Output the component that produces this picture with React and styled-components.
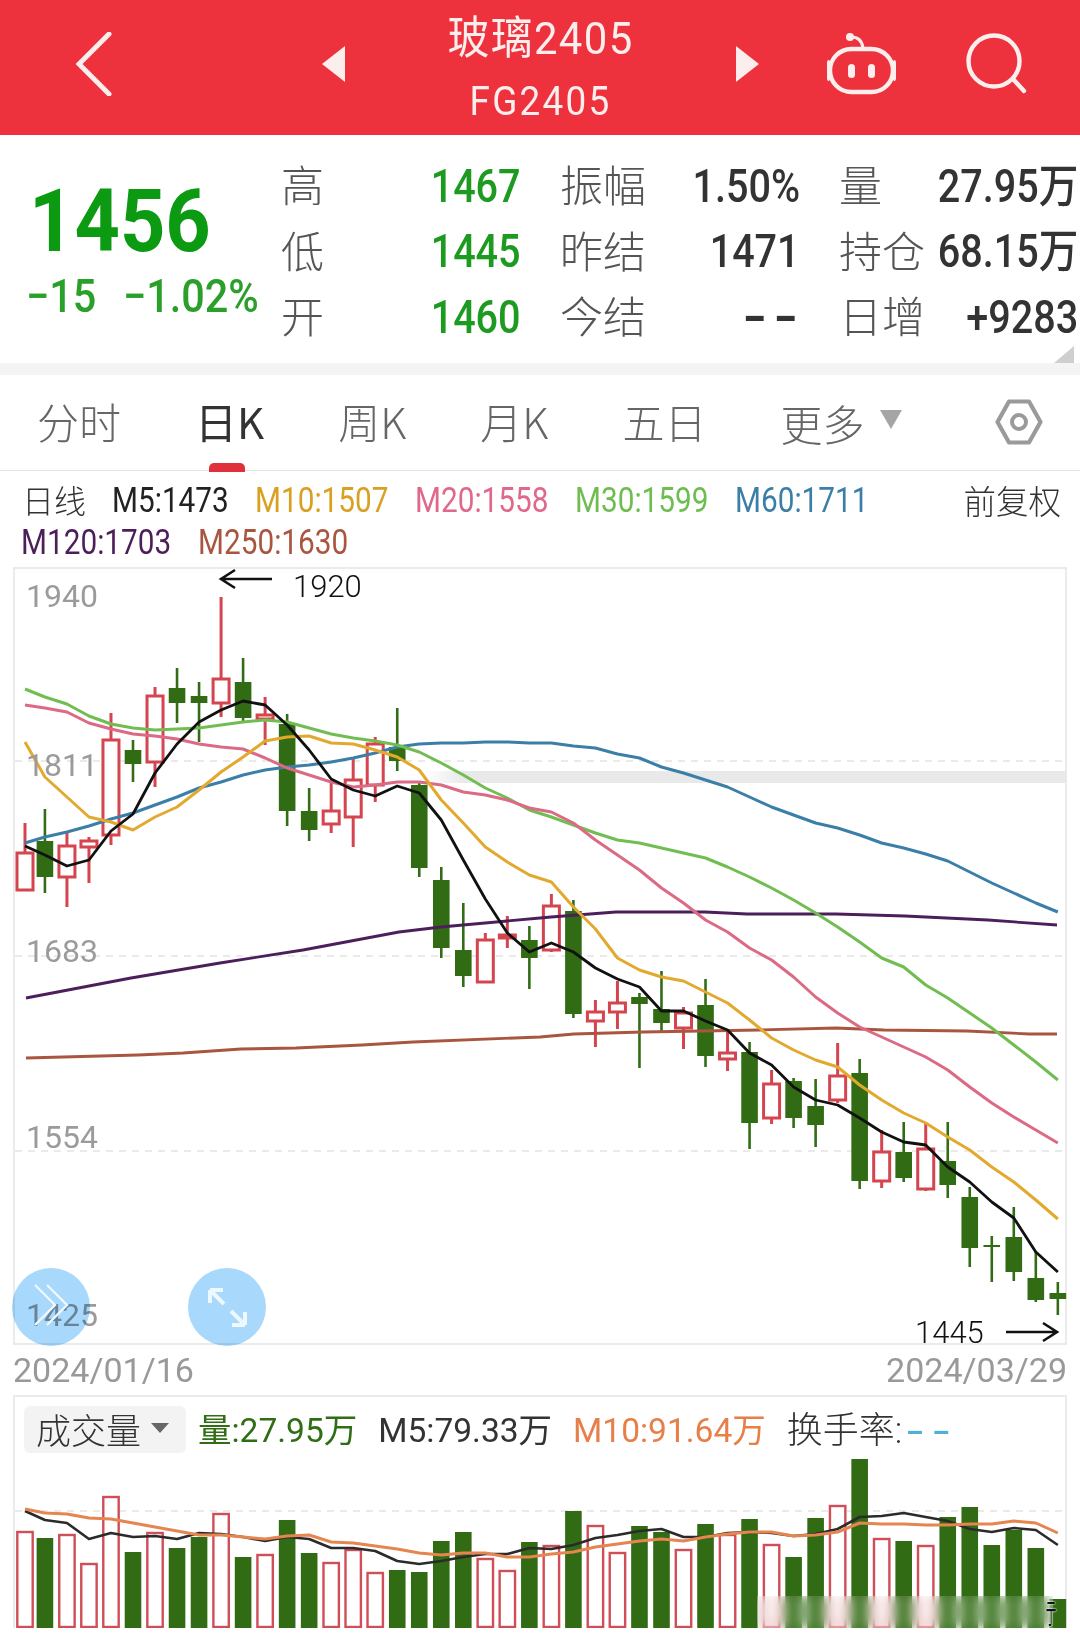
import React from "react";
import styled, { createGlobalStyle } from "styled-components";

const CJK = `"Noto Sans CJK SC", sans-serif`;
const ROBOTO = `Roboto, "Noto Sans CJK SC", sans-serif`;

const GlobalStyle = createGlobalStyle`
  html, body {
    margin: 0;
    padding: 0;
    background: #fff;
  }
  * { box-sizing: border-box; }
`;

// chart geometry is in page pixels, the svg viewBoxes are offset to match
const candleX = i => (i === 0 ? 25 : 22.9 + 22.02 * i);

// high, low, body top, body bottom, r = hollow red / g = solid green
const CANDLES = [
  [823, 890, 853, 890, "r"], [809, 893, 841, 877, "g"], [833, 907, 846, 877, "r"], [837, 883, 841, 847, "r"],
  [713, 845, 740, 835, "r"], [740, 782, 750, 764, "g"], [687, 787, 696, 762, "r"], [668, 723, 688, 703, "g"],
  [682, 742, 696, 703, "g"], [597, 717, 679, 703, "r"], [658, 721, 682, 718, "g"], [697, 745, 715, 719, "r"],
  [714, 826, 724, 811, "g"], [788, 841, 811, 830, "g"], [783, 833, 811, 824, "r"], [758, 847, 780, 817, "r"],
  [737, 802, 744, 785, "r"], [708, 771, 747, 761, "g"], [783, 877, 785, 868, "g"], [867, 958, 880, 948, "g"],
  [903, 987, 950, 976, "g"], [933, 983, 940, 982, "r"], [916, 948, 935, 938, "r"], [926, 989, 940, 958, "g"],
  [894, 952, 906, 950, "r"], [900, 1018, 911, 1014, "g"], [1000, 1047, 1012, 1021, "r"], [981, 1029, 1003, 1012, "r"],
  [993, 1068, 997, 1004, "g"], [971, 1032, 1009, 1023, "g"], [1007, 1049, 1013, 1028, "r"], [979, 1067, 1005, 1056, "g"],
  [1030, 1071, 1053, 1059, "r"], [1042, 1149, 1052, 1123, "g"], [1070, 1124, 1084, 1118, "r"], [1078, 1128, 1081, 1118, "g"],
  [1079, 1147, 1106, 1125, "g"], [1043, 1103, 1076, 1100, "r"], [1059, 1189, 1073, 1181, "g"], [1130, 1188, 1152, 1181, "r"],
  [1122, 1182, 1152, 1178, "g"], [1123, 1191, 1149, 1189, "r"], [1122, 1198, 1161, 1185, "g"], [1187, 1267, 1197, 1248, "g"],
  [1236, 1282, 1245, 1247, "g"], [1207, 1281, 1237, 1272, "g"], [1252, 1302, 1278, 1300, "g"], [1282, 1315, 1293, 1299, "g"],
];

const byIndex = ys => ys.map((y, i) => `${candleX(i)},${y}`).join(" ");
const byPoint = pts => pts.map(p => p.join(",")).join(" ");

const MA_LINES = [
  { color: "#a9553f", width: 2.8, points: byPoint([[26, 1058], [138, 1055], [183, 1053], [241, 1049], [296, 1048], [362, 1045], [413, 1042], [540, 1037], [574, 1034], [643, 1032], [760, 1030], [836, 1028], [884, 1030], [967, 1031], [1029, 1034], [1057, 1034]]) },
  { color: "#4d1f5a", width: 2.8, points: byPoint([[26, 998], [131, 978], [220, 963], [303, 950], [399, 932], [441, 927], [540, 918], [551, 917], [616, 912], [705, 912], [747, 914], [836, 914], [905, 916], [988, 920], [1057, 925]]) },
  { color: "#3b7fa8", width: 3, points: byIndex([843, 837, 832, 826, 819, 813, 805, 797, 788, 782, 775, 770, 767, 765, 762, 758, 753, 747, 744, 743, 743, 742, 742, 743, 743, 746, 748, 754, 758, 767, 773, 780, 787, 797, 807, 815, 823, 828, 835, 843, 848, 854, 861, 872, 883, 893, 903, 912]) },
  { color: "#72bd52", width: 3, points: byIndex([689, 697, 704, 716, 724, 728, 730, 729, 728, 725, 722, 720, 722, 728, 734, 738, 741, 745, 752, 763, 775, 788, 798, 810, 817, 825, 833, 840, 843, 848, 853, 858, 867, 877, 888, 900, 913, 927, 942, 958, 967, 985, 998, 1013, 1028, 1045, 1062, 1080]) },
  { color: "#dc6a85", width: 3, points: byIndex([705, 708, 712, 723, 729, 734, 736, 739, 744, 747, 749, 758, 768, 775, 782, 787, 785, 782, 782, 785, 792, 795, 800, 808, 812, 823, 840, 855, 870, 888, 903, 920, 932, 948, 960, 977, 997, 1013, 1027, 1037, 1047, 1057, 1070, 1087, 1103, 1117, 1130, 1143]) },
  { color: "#e3a92f", width: 3, points: byIndex([742, 777, 797, 817, 822, 830, 817, 807, 790, 772, 757, 741, 737, 736, 743, 744, 750, 757, 770, 800, 823, 847, 862, 875, 882, 907, 929, 958, 970, 977, 981, 992, 1003, 1020, 1038, 1050, 1060, 1067, 1085, 1100, 1113, 1123, 1137, 1150, 1167, 1182, 1200, 1219]) },
  { color: "#111", width: 2.8, points: byIndex([846, 855, 866, 860, 831, 814, 773, 744, 722, 710, 701, 705, 725, 750, 779, 790, 796, 786, 793, 820, 860, 899, 933, 952, 943, 952, 968, 979, 987, 1011, 1011, 1021, 1030, 1053, 1065, 1087, 1100, 1105, 1118, 1132, 1142, 1145, 1167, 1182, 1202, 1218, 1252, 1272]) },
];

const VOLUMES = [
  [1532, "r"], [1538, "g"], [1535, "r"], [1564, "r"], [1497, "r"], [1552, "g"], [1533, "r"], [1548, "g"],
  [1537, "g"], [1514, "r"], [1557, "g"], [1555, "r"], [1520, "g"], [1553, "g"], [1563, "r"], [1550, "r"],
  [1573, "r"], [1570, "g"], [1572, "g"], [1541, "g"], [1532, "g"], [1559, "r"], [1571, "r"], [1542, "g"],
  [1546, "r"], [1511, "g"], [1526, "r"], [1553, "r"], [1526, "g"], [1532, "g"], [1550, "r"], [1524, "g"],
  [1535, "r"], [1519, "g"], [1545, "r"], [1557, "g"], [1518, "g"], [1506, "r"], [1459, "g"], [1539, "r"],
  [1541, "g"], [1546, "r"], [1517, "g"], [1507, "g"], [1545, "g"], [1530, "g"], [1548, "g"], [1599, "g"],
];

const VOL_M5 = [1511, 1520, 1523, 1539, 1533, 1537, 1536, 1539, 1533, 1534, 1537, 1541, 1537, 1539, 1548, 1548, 1551, 1561, 1564, 1561, 1557, 1554, 1554, 1548, 1549, 1545, 1538, 1535, 1531, 1529, 1537, 1537, 1533, 1532, 1533, 1536, 1534, 1529, 1517, 1516, 1513, 1517, 1521, 1529, 1532, 1528, 1530, 1545];
const VOL_M10 = [1509, 1513, 1514, 1518, 1519, 1523, 1527, 1531, 1535, 1535, 1537, 1539, 1536, 1535, 1542, 1543, 1546, 1549, 1553, 1555, 1553, 1553, 1557, 1557, 1554, 1552, 1547, 1544, 1541, 1539, 1541, 1537, 1534, 1532, 1532, 1536, 1535, 1532, 1523, 1524, 1524, 1525, 1525, 1524, 1524, 1521, 1523, 1533];

const STATS = [
  { label: "高", value: "1467", tone: "green" },
  { label: "振幅", value: "1.50%" },
  { label: "量", value: "27.95万" },
  { label: "低", value: "1445", tone: "green" },
  { label: "昨结", value: "1471" },
  { label: "持仓", value: "68.15万" },
  { label: "开", value: "1460", tone: "green" },
  { label: "今结", value: "--", dash: true },
  { label: "日增", value: "+9283" },
];

const TABS = ["分时", "日K", "周K", "月K", "五日"];

const AXIS = [
  { y: 596, text: "1940" },
  { y: 765, text: "1811" },
  { y: 951, text: "1683" },
  { y: 1137, text: "1554" },
  { y: 1315, text: "1425" },
];

const Page = styled.div`
  width: 1080px;
  height: 1650px;
  overflow: hidden;
  background: #fff;
`;

const Header = styled.header`
  height: 135px;
  background: #ee323d;
  color: #fff;
  display: flex;
  align-items: center;
  padding: 0 0 8px 76px;
`;

const BackIcon = styled.svg`
  width: 36px;
  height: 64px;
  flex: none;
`;

const Arrow = styled.svg`
  width: 23px;
  height: 36px;
  flex: none;
  margin-left: ${props => props.$gap || 0}px;
`;

const TitleBlock = styled.div`
  width: 391px;
  flex: none;
  text-align: center;
  color: #fdeeee;
  margin-top: 12px;
`;

const Title = styled.div`
  font-family: ${ROBOTO};
  font-size: 45px;
  line-height: 50px;
  letter-spacing: 1.5px;
  margin-top: -3px;
  transform: scaleX(0.93);
`;

const Subtitle = styled.div`
  font-family: ${ROBOTO};
  font-size: 41px;
  line-height: 44px;
  letter-spacing: 2.5px;
  margin-top: 15px;
  transform: scaleX(0.9);
`;

const RobotIcon = styled.svg`
  width: 69px;
  height: 62px;
  flex: none;
  margin-left: 68px;
`;

const SearchIcon = styled.svg`
  width: 62px;
  height: 62px;
  flex: none;
  margin-left: 70px;
`;

const Quote = styled.section`
  height: 228px;
  display: flex;
  position: relative;
`;

const PriceBlock = styled.div`
  width: 281px;
  flex: none;
  padding: 44px 0 0 26px;
`;

const Price = styled.div`
  font-family: ${ROBOTO};
  font-weight: 700;
  font-size: 88px;
  line-height: 84px;
  margin-left: 3px;
  color: #0c9a12;
  transform: scaleX(0.9);
  transform-origin: left center;
`;

const Change = styled.div`
  display: grid;
  grid-template-columns: 97px auto;
  margin-top: 10px;
  font-family: ${ROBOTO};
  font-weight: 500;
  font-size: 46.5px;
  line-height: 46px;
  color: #2a9f2a;
  white-space: nowrap;
`;

const ChangeValue = styled.span`
  display: inline-block;
  transform: scaleX(0.89);
  transform-origin: left center;
`;

const StatGrid = styled.div`
  flex: 1;
  display: grid;
  grid-template-columns: 240px 240px 239px;
  column-gap: 39px;
  grid-auto-rows: 65.5px;
  padding-top: 18px;
`;

const StatCell = styled.div`
  display: flex;
  align-items: center;
  justify-content: space-between;
  white-space: nowrap;
`;

const StatLabel = styled.span`
  font-family: ${CJK};
  font-size: 43px;
  font-weight: 300;
  color: #555;
  line-height: 1;
  flex: none;
  margin-top: -4px;
`;

const StatValue = styled.span`
  display: inline-block;
  flex: none;
  margin-left: -20px;
  font-family: ${ROBOTO};
  font-weight: 500;
  font-size: 46px;
  line-height: 1;
  transform: scaleX(0.86);
  transform-origin: right center;
  color: ${props => (props.$tone === "green" ? "#1d9a20" : "#333")};
`;

const StatDash = styled(StatValue)`
  font-weight: 700;
  letter-spacing: 4px;
  margin-right: -4px;
  transform: scaleX(1.4);
`;

const CornerMark = styled.div`
  position: absolute;
  right: 6px;
  bottom: 0;
  width: 0;
  height: 0;
  border-left: 20px solid transparent;
  border-bottom: 17px solid #cfcfcf;
`;

const Divider = styled.div`
  height: 12px;
  background: #f4f4f4;
`;

const TabBar = styled.nav`
  height: 96px;
  border-bottom: 1px solid #e4e4e4;
  display: flex;
  align-items: center;
  gap: 74px;
  padding: 0 37px 0 37px;
`;

const Tab = styled.div`
  position: relative;
  font-family: ${CJK};
  font-size: 42px;
  line-height: 92px;
  height: 96px;
  font-weight: ${props => (props.$active ? 400 : 300)};
  color: ${props => (props.$active ? "#333" : "#666")};

  &::after {
    content: "";
    display: ${props => (props.$active ? "block" : "none")};
    position: absolute;
    left: 14px;
    bottom: -1px;
    width: 36px;
    height: 9px;
    background: #e0303a;
    border-radius: 5px 5px 0 0;
  }
`;

const MoreTab = styled(Tab)`
  display: flex;
  align-items: center;
  gap: 15px;
`;

const MoreCaret = styled.span`
  width: 0;
  height: 0;
  margin-top: -6px;
  border-left: 11px solid transparent;
  border-right: 11px solid transparent;
  border-top: 19px solid #a5a5a5;
`;

const HexIcon = styled.svg`
  width: 48px;
  height: 46px;
  margin-left: auto;
  margin-top: -2px;
`;

const Legend = styled.div`
  height: 96px;
  padding: 9px 19px 0 0;
`;

const LegendRow = styled.div`
  height: 42px;
  display: flex;
  align-items: center;
  gap: ${props => props.$gap}px;
  padding-left: ${props => props.$inset}px;
`;

const LegendName = styled.span`
  flex: none;
  white-space: nowrap;
  margin-top: -4px;
  font-family: ${CJK};
  font-size: 32px;
  color: #333;
  font-weight: 300;
`;

const LegendItem = styled.span`
  flex: none;
  width: ${props => props.$width}px;
  white-space: nowrap;
  font-family: ${ROBOTO};
  font-size: 35px;
  line-height: 42px;
  color: ${props => props.$color};
  transform: scaleX(0.85);
  transform-origin: left center;
`;

const LegendRight = styled(LegendName)`
  margin-left: auto;
  font-size: 32.5px;
`;

const ChartFrame = styled.div`
  position: relative;
  height: 778px;
  margin: 0 13px;
  box-shadow: inset 0 0 0 2px #ebebeb;
`;

const ChartSvg = styled.svg`
  display: block;
  width: 1054px;
  height: 778px;
`;

const AxisLabel = styled.span`
  position: absolute;
  left: 13px;
  top: ${props => props.$y - 567 - 18}px;
  font-family: ${ROBOTO};
  font-size: 32px;
  line-height: 36px;
  color: #9b9b9b;
`;

const PriceNote = styled.span`
  position: absolute;
  left: ${props => props.$x - 13}px;
  top: ${props => props.$y - 567 - 18}px;
  font-family: ${ROBOTO};
  font-weight: 300;
  font-size: 31px;
  line-height: 36px;
  color: #111;
`;

const RoundButton = styled.div`
  position: absolute;
  left: ${props => props.$x - 13}px;
  bottom: -1px;
  width: 78px;
  height: 78px;
  display: flex;
  align-items: center;
  justify-content: center;

  &::before {
    content: "";
    position: absolute;
    inset: 0;
    border-radius: 50%;
    background: #a8d8fb;
    mix-blend-mode: multiply;
  }
`;

const RoundIcon = styled.svg`
  position: relative;
  width: 52px;
  height: 52px;
`;

const DateRow = styled.div`
  height: 50px;
  margin: 0 13px;
  display: flex;
  justify-content: space-between;
  align-items: center;
  font-family: ${ROBOTO};
  font-size: 34px;
  color: #999;
`;

const VolumePanel = styled.section`
  position: relative;
  height: 233px;
  margin: 0 13px;
  border: solid #ebebeb;
  border-width: 2px 2px 0 2px;
  padding-top: 9px;
`;

const VolumeBar = styled.div`
  height: 47px;
  display: flex;
  align-items: center;
  padding-left: 9px;
`;

const VolumeSelect = styled.div`
  width: 162px;
  height: 47px;
  flex: none;
  display: flex;
  align-items: center;
  gap: 10px;
  padding: 0 0 3px 12px;
  border-radius: 6px;
  background: #f3f3f3;
  font-family: ${CJK};
  font-size: 35px;
  font-weight: 300;
  color: #333;
`;

const SelectCaret = styled.span`
  width: 0;
  height: 0;
  border-left: 9px solid transparent;
  border-right: 9px solid transparent;
  border-top: 10px solid #666;
`;

const VolumeValue = styled.span`
  font-family: ${ROBOTO};
  font-size: 33.5px;
  white-space: nowrap;
  margin-left: ${props => props.$gap}px;
  padding-bottom: 5px;
  color: ${props => props.$color};
`;

const TurnoverValue = styled(VolumeValue)`
  font-size: 36px;
  font-weight: 300;
`;

const TurnoverDash = styled.span`
  display: inline-block;
  margin-left: 4px;
  font-size: 33.5px;
  font-weight: 500;
  letter-spacing: 5px;
  color: #4fb0d8;
  transform: scaleX(1.6);
  transform-origin: left center;
`;

const VolumeSvg = styled.svg`
  display: block;
  width: 1054px;
  height: 175px;
  margin-left: -2px;
`;

const BlurPatch = styled.div`
  position: absolute;
  left: 742px;
  bottom: 0;
  width: 296px;
  height: 32px;
  backdrop-filter: blur(6px);
  background: rgba(255, 255, 255, 0.08);
`;

const WatermarkTail = styled.div`
  position: absolute;
  left: 1022px;
  bottom: 2px;
  font-family: ${CJK};
  font-size: 28px;
  line-height: 28px;
  color: #111;
  text-shadow: 0 0 3px #fff, 0 0 3px #fff;
  transform: scaleX(0.38);
`;

function Candle({ data, index }) {
  const [high, low, top, bottom, kind] = data;
  const x = candleX(index);
  if (kind === "r") {
    return (
      <g>
        <line x1={x} x2={x} y1={high} y2={low} stroke="#d4454f" strokeWidth="3" />
        <rect x={x - 8} y={top} width="16" height={bottom - top} fill="#fff" stroke="#d4454f" strokeWidth="3" />
      </g>
    );
  }
  return (
    <g>
      <line x1={x} x2={x} y1={high} y2={low} stroke="#326d16" strokeWidth="2.6" />
      <rect x={x - 8.3} y={top} width="16.6" height={bottom - top} fill="#316b14" />
    </g>
  );
}

function Candlesticks() {
  return (
    <ChartSvg viewBox="13 567 1054 778">
      <defs>
        <linearGradient id="bandFade" x1="0" x2="1" y1="0" y2="0">
          <stop offset="0" stopColor="#e9e9e9" stopOpacity="0" />
          <stop offset="0.06" stopColor="#e9e9e9" />
        </linearGradient>
      </defs>
      {[761, 956, 1151].map(y => (
        <line key={y} x1="15" x2="1065" y1={y} y2={y} stroke="#e4e4e4" strokeWidth="1.5" strokeDasharray="7 6" />
      ))}
      <rect x="425" y="771" width="642" height="12" fill="url(#bandFade)" />
      {CANDLES.map((c, i) => <Candle key={i} data={c} index={i} />)}
      {MA_LINES.map(line => (
        <polyline key={line.color} points={line.points} fill="none" stroke={line.color} strokeWidth={line.width} strokeLinejoin="round" />
      ))}
      <path d="M272 579H222M235 570l-14 9 14 9" fill="none" stroke="#111" strokeWidth="2.6" />
      <path d="M1006 1332h50M1043 1323l14 9-14 9" fill="none" stroke="#111" strokeWidth="2.6" />
    </ChartSvg>
  );
}

function VolumeBars() {
  return (
    <VolumeSvg viewBox="13 1453 1054 175">
      <line x1="15" x2="1065" y1="1511" y2="1511" stroke="#e4e4e4" strokeWidth="1.5" strokeDasharray="7 6" />
      {VOLUMES.map(([top, kind], i) => {
        const x = candleX(i);
        return kind === "r"
          ? <rect key={i} x={x - 7.7} y={top} width="15.4" height={1627 - top} fill="#fff" stroke="#cf4e58" strokeWidth="2.4" />
          : <rect key={i} x={x - 8.3} y={top} width="16.6" height={1628 - top} fill="#316b14" />;
      })}
      <polyline points={byIndex(VOL_M5)} fill="none" stroke="#2b2b2b" strokeWidth="2.6" strokeLinejoin="round" />
      <polyline points={byIndex(VOL_M10)} fill="none" stroke="#e58550" strokeWidth="3" strokeLinejoin="round" />
    </VolumeSvg>
  );
}

export default function App() {
  return (
    <Page>
      <GlobalStyle />
      <Header>
        <BackIcon viewBox="0 0 36 64">
          <path d="M33 2 3 32l30 30" fill="none" stroke="#fdeeee" strokeWidth="5" strokeLinecap="round" />
        </BackIcon>
        <Arrow $gap={210} viewBox="0 0 23 36"><path d="M23 0v36L0 18z" fill="#fdeeee" /></Arrow>
        <TitleBlock>
          <Title>玻璃2405</Title>
          <Subtitle>FG2405</Subtitle>
        </TitleBlock>
        <Arrow viewBox="0 0 23 36"><path d="M0 0v36l23-18z" fill="#fdeeee" /></Arrow>
        <RobotIcon viewBox="0 0 69 62">
          <circle cx="23" cy="4" r="4" fill="#fdeeee" />
          <path d="M24 4c6 0 11 3 12 11" fill="none" stroke="#fdeeee" strokeWidth="3" />
          <rect x="3" y="16" width="63" height="43" rx="21.5" fill="none" stroke="#fdeeee" strokeWidth="4.4" />
          <path d="M3 28c-3 5-3 14 0 19M66 28c3 5 3 14 0 19" fill="none" stroke="#fdeeee" strokeWidth="4.4" />
          <rect x="21" y="31" width="7" height="14" rx="3.5" fill="#fdeeee" />
          <rect x="41" y="31" width="7" height="14" rx="3.5" fill="#fdeeee" />
        </RobotIcon>
        <SearchIcon viewBox="0 0 62 62">
          <circle cx="28" cy="28" r="25.5" fill="none" stroke="#fdeeee" strokeWidth="4.4" />
          <path d="M47 46l11 12" fill="none" stroke="#fdeeee" strokeWidth="4.4" strokeLinecap="round" />
        </SearchIcon>
      </Header>

      <Quote>
        <PriceBlock>
          <Price>1456</Price>
          <Change>
            <ChangeValue>−15</ChangeValue>
            <ChangeValue>−1.02%</ChangeValue>
          </Change>
        </PriceBlock>
        <StatGrid>
          {STATS.map(stat => (
            <StatCell key={stat.label}>
              <StatLabel>{stat.label}</StatLabel>
              {stat.dash
                ? <StatDash>{stat.value}</StatDash>
                : <StatValue $tone={stat.tone}>{stat.value}</StatValue>}
            </StatCell>
          ))}
        </StatGrid>
        <CornerMark />
      </Quote>
      <Divider />

      <TabBar>
        {TABS.map(tab => <Tab key={tab} $active={tab === "日K"}>{tab}</Tab>)}
        <MoreTab>更多<MoreCaret /></MoreTab>
        <HexIcon viewBox="0 0 48 46">
          <path d="M14 2.5h20L45.5 23 34 43.5H14L2.5 23z" fill="none" stroke="#9a9a9a" strokeWidth="4.2" strokeLinejoin="round" />
          <circle cx="24" cy="23" r="7" fill="none" stroke="#9a9a9a" strokeWidth="4" />
        </HexIcon>
      </TabBar>

      <Legend>
        <LegendRow $gap={26} $inset={22}>
          <LegendName>日线</LegendName>
          <LegendItem $width={117} $color="#222">M5:1473</LegendItem>
          <LegendItem $width={134} $color="#d9a021">M10:1507</LegendItem>
          <LegendItem $width={134} $color="#e0688a">M20:1558</LegendItem>
          <LegendItem $width={134} $color="#6fbd50">M30:1599</LegendItem>
          <LegendItem $width={134} $color="#3b7fa8">M60:1711</LegendItem>
          <LegendRight>前复权</LegendRight>
        </LegendRow>
        <LegendRow $gap={28} $inset={21}>
          <LegendItem $width={149} $color="#4d1f5a">M120:1703</LegendItem>
          <LegendItem $width={149} $color="#a9553f">M250:1630</LegendItem>
        </LegendRow>
      </Legend>

      <ChartFrame>
        <Candlesticks />
        {AXIS.map(a => <AxisLabel key={a.text} $y={a.y}>{a.text}</AxisLabel>)}
        <PriceNote $x={293} $y={587}>1920</PriceNote>
        <PriceNote $x={915} $y={1333}>1445</PriceNote>
        <RoundButton $x={12}>
          <RoundIcon viewBox="0 0 52 52">
            <path d="M10 4l20 20-20 20M22 4l20 20-20 20" fill="none" stroke="#eef8ff" strokeWidth="2.4" />
          </RoundIcon>
        </RoundButton>
        <RoundButton $x={188}>
          <RoundIcon viewBox="0 0 52 52">
            <path d="M9 9l14 14M9 9h13M9 9v13M44 44 30 30M44 44H31M44 44V31" fill="none" stroke="#eef8ff" strokeWidth="4" />
          </RoundIcon>
        </RoundButton>
      </ChartFrame>

      <DateRow>
        <span>2024/01/16</span>
        <span>2024/03/29</span>
      </DateRow>

      <VolumePanel>
        <VolumeBar>
          <VolumeSelect>成交量<SelectCaret /></VolumeSelect>
          <VolumeValue $gap={12} $color="#2f6e14">量:27.95万</VolumeValue>
          <VolumeValue $gap={21} $color="#333">M5:79.33万</VolumeValue>
          <VolumeValue $gap={21} $color="#e67f48">M10:91.64万</VolumeValue>
          <TurnoverValue $gap={21} $color="#333">换手率:<TurnoverDash>--</TurnoverDash></TurnoverValue>
        </VolumeBar>
        <VolumeBars />
        <BlurPatch />
        <WatermarkTail>亍</WatermarkTail>
      </VolumePanel>
    </Page>
  );
}
